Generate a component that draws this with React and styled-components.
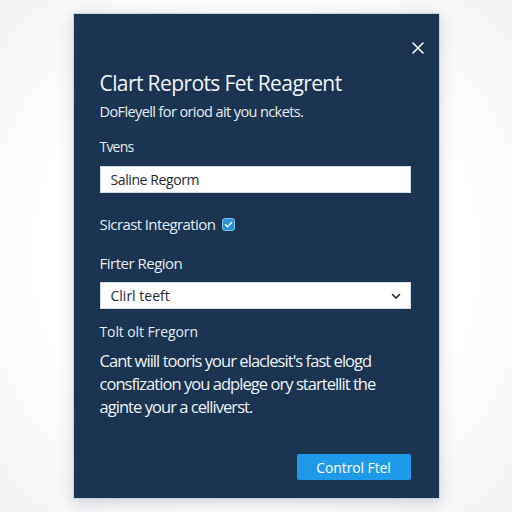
import React from "react";
import styled, { createGlobalStyle } from "styled-components";

const Global = createGlobalStyle`
  html, body { margin: 0; padding: 0; background: #ffffff; }
  body { font-family: "Open Sans", "Noto Sans", sans-serif; }
  * { box-sizing: border-box; }
`;

const Page = styled.div`
  width: 512px;
  height: 512px;
  display: flex;
  align-items: center;
  justify-content: center;
  background: radial-gradient(circle at 50% 50%, #ffffff 60%, #f1f3f5 100%);
`;

const Modal = styled.div`
  width: 367px;
  height: 486px;
  background: #1a3451;
  border: 1px solid #c9d2dc;
  box-shadow: 0 4px 14px rgba(20, 30, 50, 0.18);
  padding: 15px 28px 0 26px;
  display: flex;
  flex-direction: column;
  color: #eef2f6;
`;

const CloseRow = styled.div`
  display: flex;
  justify-content: flex-end;
  margin-right: -14px;
  height: 14px;
`;

const Close = styled.svg`
  width: 14px;
  height: 14px;
  margin-top: 12px;
`;

const Title = styled.h1`
  margin: 26px 0 0 0;
  font-size: 21px;
  font-weight: 400;
  line-height: 28px;
  letter-spacing: -0.6px;
  color: #f2f5f8;
`;

const Subtitle = styled.p`
  margin: 5px 0 0 0;
  font-size: 14.5px;
  line-height: 20px;
  letter-spacing: -0.6px;
  color: #e6ecf2;
`;

const Label = styled.div`
  margin-top: ${(p) => p.$mt}px;
  font-size: ${(p) => p.$size || 14}px;
  letter-spacing: ${(p) => p.$ls ?? -0.5}px;
  line-height: 20px;
  color: #e4eaf0;
  display: flex;
  align-items: center;
  gap: 7px;
`;

const Field = styled.div`
  margin-top: ${(p) => p.$mt}px;
  height: 27px;
  background: #ffffff;
  border: 1px solid #d5dbe2;
  display: flex;
  align-items: center;
  justify-content: space-between;
  padding: 0 8px 0 10px;
  font-size: 14px;
  letter-spacing: ${(p) => p.$ls ?? -0.4}px;
  color: #1f2a36;
`;

const Check = styled.span`
  width: 13px;
  height: 13px;
  border-radius: 3px;
  background: #2b92d6;
  border: 1px solid #7cc3ee;
  display: inline-flex;
  align-items: center;
  justify-content: center;
`;

const Para = styled.p`
  margin: 7px 0 0 0;
  font-size: 16.5px;
  line-height: 23px;
  letter-spacing: -0.95px;
  color: #eef2f6;
  width: 285px;
`;

const Footer = styled.div`
  margin-top: auto;
  margin-bottom: 18px;
  display: flex;
  justify-content: flex-end;
`;

const Button = styled.button`
  width: 114px;
  height: 26px;
  background: #1e9ae8;
  border: none;
  border-radius: 2px;
  color: #ffffff;
  font-family: "Open Sans", sans-serif;
  font-size: 14px;
  letter-spacing: -0.1px;
  padding: 0;
`;

export default function App() {
  return (
    <>
      <Global />
      <Page>
        <Modal>
          <CloseRow>
            <Close viewBox="0 0 14 14">
              <path d="M2 2 L12 12 M12 2 L2 12" stroke="#ffffff" strokeWidth="1.6" strokeLinecap="round" />
            </Close>
          </CloseRow>
          <Title>Clart Reprots Fet Reagrent</Title>
          <Subtitle>DoFleyell for oriod ait you nckets.</Subtitle>
          <Label $mt={15} $ls={-0.8}>Tvens</Label>
          <Field $mt={9}>Saline Regorm</Field>
          <Label $mt={21} $size={15} $ls={-0.6}>
            Sicrast Integration
            <Check>
              <svg width="9" height="9" viewBox="0 0 9 9">
                <path d="M1.5 4.8 L3.6 6.8 L7.5 2.5" stroke="#ffffff" strokeWidth="1.4" fill="none" strokeLinecap="round" />
              </svg>
            </Check>
          </Label>
          <Label $mt={19} $size={15} $ls={-0.5}>Firter Region</Label>
          <Field $mt={9} $ls={0}>
            Clirl teeft
            <svg width="12" height="12" viewBox="0 0 12 12">
              <path d="M2.5 4.5 L6 8 L9.5 4.5" stroke="#1f2a36" strokeWidth="1.6" fill="none" strokeLinecap="round" />
            </svg>
          </Field>
          <Label $mt={13} $ls={-0.1}>Tolt olt Fregorn</Label>
          <Para>Cant wiill tooris your elaclesit's fast elogd consfization you adplege ory startellit the aginte your a celliverst.</Para>
          <Footer>
            <Button>Control Ftel</Button>
          </Footer>
        </Modal>
      </Page>
    </>
  );
}
